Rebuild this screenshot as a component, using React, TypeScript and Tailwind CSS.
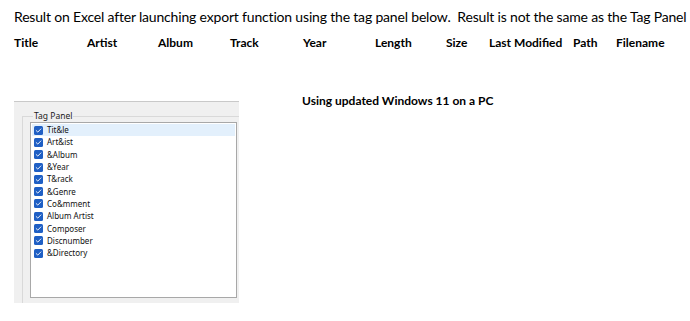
import React from 'react';

const COLUMNS: { label: string; width: string }[] = [
    { label: 'Title', width: 'w-[73px]' },
    { label: 'Artist', width: 'w-[71px]' },
    { label: 'Album', width: 'w-[72px]' },
    { label: 'Track', width: 'w-[73px]' },
    { label: 'Year', width: 'w-[72px]' },
    { label: 'Length', width: 'w-[71px]' },
    { label: 'Size', width: 'w-[43px]' },
    { label: 'Last Modified', width: 'w-[84px]' },
    { label: 'Path', width: 'w-[43px]' },
    { label: 'Filename', width: 'w-[60px]' },
];

const TAGS = [
    'Tit&le',
    'Art&ist',
    '&Album',
    '&Year',
    'T&rack',
    '&Genre',
    'Co&mment',
    'Album Artist',
    'Composer',
    'Discnumber',
    '&Directory',
];

const CheckMark: React.FC = () => (
    <svg width="9" height="9" viewBox="0 0 9 9" className="shrink-0">
        <rect x="0" y="0" width="9" height="9" rx="1.5" fill="#1f5fc4" />
        <path d="M2.2 4.6 L3.8 6.1 L6.9 2.9" fill="none" stroke="#ffffff" strokeWidth="0.9" strokeLinecap="round" strokeLinejoin="round" />
    </svg>
);

const TagPanel: React.FC = () => (
    <div className="w-[225px] h-[202px] overflow-hidden bg-[#f0f0f0] border-t border-[#c9c9c9] pl-[8px] pt-[8px]">
        <fieldset className="w-[240px] h-[230px] border-l border-t border-[#d9d9d9] pl-[7px]">
            <legend className="ml-[3px] px-[1px] text-[8.5px] leading-[12px] text-[#1a1a1a]">Tag Panel</legend>
            <div className="w-[207px] h-[176px] bg-white border border-[#a8a8a8] pt-[1px] pl-[1px] pr-[1px]">
                {TAGS.map((tag, i) => (
                    <div
                        key={tag}
                        className={`flex items-center gap-[4px] h-[12.3px] pl-[2px] text-[8px] text-[#111] ${i === 0 ? 'bg-[#e3f0fc]' : ''}`}
                    >
                        <CheckMark />
                        <span>{tag}</span>
                    </div>
                ))}
            </div>
        </fieldset>
    </div>
);

export default function App() {
    return (
        <div className="w-[690px] h-[321px] bg-white px-[14px] pt-[8px] text-black" style={{ fontFamily: 'Lato, "Open Sans", sans-serif' }}>
            <p className="text-[14px] leading-[18px] tracking-[-0.18px] whitespace-nowrap">
                Result on Excel after launching export function using the tag panel below.&nbsp; Result is not the same as the Tag Panel
            </p>
            <div className="flex mt-[9px] text-[12px] leading-[16px] font-bold whitespace-nowrap">
                {COLUMNS.map((c) => (
                    <div key={c.label} className={`${c.width} shrink-0`}>{c.label}</div>
                ))}
            </div>
            <div className="flex mt-[42px]">
                <div className="mt-[8px]" style={{ fontFamily: '"Segoe UI", "Noto Sans", sans-serif' }}>
                    <TagPanel />
                </div>
                <p className="ml-[63px] text-[12px] leading-[16px] font-bold whitespace-nowrap">
                    Using updated Windows 11 on a PC
                </p>
            </div>
        </div>
    );
}
